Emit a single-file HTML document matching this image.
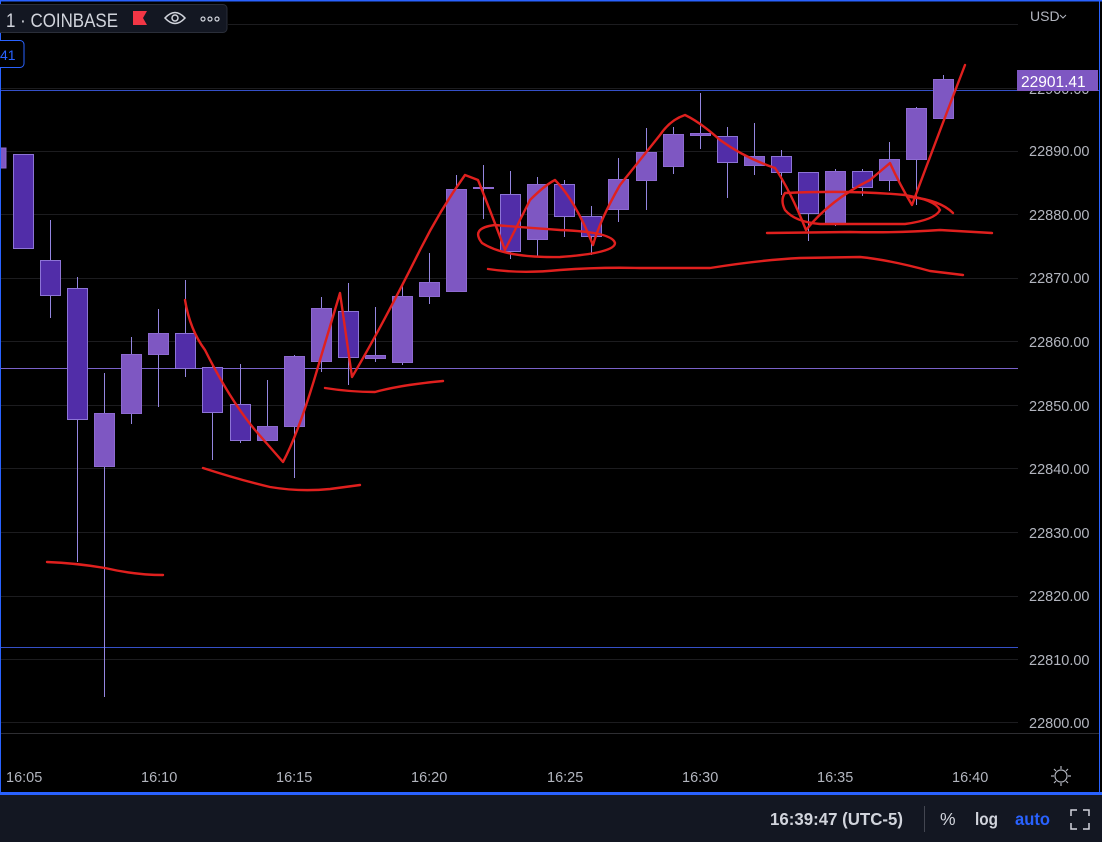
<!DOCTYPE html>
<html><head><meta charset="utf-8"><style>
html,body{margin:0;padding:0;background:#000;width:1102px;height:842px;overflow:hidden;font-family:"Liberation Sans",sans-serif}
svg{position:absolute;left:0;top:0}
.t{font-family:"Liberation Sans",sans-serif}
</style></head><body>
<svg width="1102" height="842" viewBox="0 0 1102 842">
<rect width="1102" height="842" fill="#000"/>
<g stroke="#1c1c1f" stroke-width="1">
<line x1="228" y1="24.5" x2="1018" y2="24.5"/><line x1="0" y1="88.5" x2="1018" y2="88.5"/>
<line x1="0" y1="151.5" x2="1018" y2="151.5"/><line x1="0" y1="214.5" x2="1018" y2="214.5"/>
<line x1="0" y1="278.5" x2="1018" y2="278.5"/><line x1="0" y1="341.5" x2="1018" y2="341.5"/>
<line x1="0" y1="405.5" x2="1018" y2="405.5"/><line x1="0" y1="468.5" x2="1018" y2="468.5"/>
<line x1="0" y1="532.5" x2="1018" y2="532.5"/><line x1="0" y1="596.5" x2="1018" y2="596.5"/>
<line x1="0" y1="659.5" x2="1018" y2="659.5"/><line x1="0" y1="722.5" x2="1018" y2="722.5"/>
</g>
<line x1="0" y1="733.5" x2="1100" y2="733.5" stroke="#2e2e32"/>
<line x1="0" y1="90.5" x2="1018" y2="90.5" stroke="#3550c8"/>
<line x1="0" y1="647.5" x2="1018" y2="647.5" stroke="#3550c8"/>
<line x1="0" y1="368.5" x2="1018" y2="368.5" stroke="#7a62c9"/>
<line x1="1018" y1="90.5" x2="1100" y2="90.5" stroke="#3550c8"/>
<g stroke="#9486e0" stroke-width="1">
<line x1="50.5" y1="220" x2="50.5" y2="318"/><line x1="77.5" y1="277" x2="77.5" y2="562"/>
<line x1="104.5" y1="373" x2="104.5" y2="697"/><line x1="131.5" y1="337" x2="131.5" y2="424"/>
<line x1="158.5" y1="309" x2="158.5" y2="407"/><line x1="185.5" y1="280" x2="185.5" y2="377"/>
<line x1="212.5" y1="364" x2="212.5" y2="460"/><line x1="240.5" y1="364" x2="240.5" y2="443"/>
<line x1="267.5" y1="380" x2="267.5" y2="440"/><line x1="294.5" y1="355" x2="294.5" y2="478"/>
<line x1="321.5" y1="297" x2="321.5" y2="372"/><line x1="348.5" y1="283" x2="348.5" y2="385"/>
<line x1="375.5" y1="307" x2="375.5" y2="362"/><line x1="402.5" y1="286" x2="402.5" y2="365"/>
<line x1="429.5" y1="253" x2="429.5" y2="304"/><line x1="456.5" y1="175" x2="456.5" y2="291"/>
<line x1="483.5" y1="165" x2="483.5" y2="219"/><line x1="510.5" y1="171" x2="510.5" y2="259"/>
<line x1="537.5" y1="177" x2="537.5" y2="256"/><line x1="564.5" y1="180" x2="564.5" y2="237"/>
<line x1="591.5" y1="206" x2="591.5" y2="255"/><line x1="618.5" y1="158" x2="618.5" y2="222"/>
<line x1="646.5" y1="128" x2="646.5" y2="210"/><line x1="673.5" y1="127" x2="673.5" y2="174"/>
<line x1="700.5" y1="93" x2="700.5" y2="149"/><line x1="727.5" y1="127" x2="727.5" y2="198"/>
<line x1="754.5" y1="123" x2="754.5" y2="175"/><line x1="781.5" y1="150" x2="781.5" y2="195"/>
<line x1="808.5" y1="172" x2="808.5" y2="241"/><line x1="835.5" y1="169" x2="835.5" y2="226"/>
<line x1="862.5" y1="169" x2="862.5" y2="196"/><line x1="889.5" y1="142" x2="889.5" y2="191"/>
<line x1="916.5" y1="107" x2="916.5" y2="205"/><line x1="943.5" y1="75" x2="943.5" y2="120"/>
</g>
<g fill="#7e57c2" stroke="#8d6ad0">
<rect x="-8" y="148" width="14" height="20"/>
<rect x="94.5" y="413.5" width="20" height="53"/><rect x="121.5" y="354.5" width="20" height="59"/>
<rect x="148.5" y="333.5" width="20" height="21"/><rect x="257.5" y="426.5" width="20" height="14"/>
<rect x="284.5" y="356.5" width="20" height="70"/><rect x="311.5" y="308.5" width="20" height="53"/>
<rect x="365.5" y="355.5" width="20" height="3"/><rect x="392.5" y="296.5" width="20" height="66"/>
<rect x="419.5" y="282.5" width="20" height="14"/><rect x="446.5" y="189.5" width="20" height="102"/>
<rect x="473.5" y="187.5" width="20" height="1"/>
<rect x="527.5" y="184.5" width="20" height="55"/><rect x="608.5" y="179.5" width="20" height="30"/>
<rect x="636.5" y="152.5" width="20" height="28"/><rect x="663.5" y="134.5" width="20" height="32"/>
<rect x="690.5" y="133.5" width="20" height="2"/><rect x="744.5" y="156.5" width="20" height="9"/>
<rect x="825.5" y="171.5" width="20" height="53"/><rect x="879.5" y="159.5" width="20" height="21"/>
<rect x="906.5" y="108.5" width="20" height="51"/><rect x="933.5" y="79.5" width="20" height="39"/>
</g>
<g fill="#512da8" stroke="#8d74d6">
<rect x="13.5" y="154.5" width="20" height="94"/><rect x="40.5" y="260.5" width="20" height="35"/>
<rect x="67.5" y="288.5" width="20" height="131"/><rect x="175.5" y="333.5" width="20" height="35"/>
<rect x="202.5" y="367.5" width="20" height="45"/><rect x="230.5" y="404.5" width="20" height="36"/>
<rect x="338.5" y="311.5" width="20" height="46"/><rect x="500.5" y="194.5" width="20" height="57"/>
<rect x="554.5" y="184.5" width="20" height="32"/><rect x="581.5" y="216.5" width="20" height="20"/>
<rect x="717.5" y="136.5" width="20" height="26"/><rect x="771.5" y="156.5" width="20" height="16"/>
<rect x="798.5" y="172.5" width="20" height="41"/><rect x="852.5" y="171.5" width="20" height="16"/>
</g>
<g fill="none" stroke="#e0201e" stroke-width="2.4" stroke-linecap="round" stroke-linejoin="round">
<path d="M47 562 Q75 563 105 568 Q135 575 163 575"/>
<path d="M203 468 Q240 480 270 487 Q300 492 330 489 L360 485"/>
<path d="M185 300 Q190 330 205 350 Q230 400 255 430 L283 462 Q300 430 320 360 L340 293 L352 377 Q380 330 420 250 Q440 210 465 175 L478 180 Q490 210 505 250 Q515 230 530 200 Q545 185 555 180 Q575 200 593 245 Q600 220 620 185 Q640 160 660 135 Q670 120 685 115 Q700 122 720 140 Q745 158 775 168 Q790 190 806 230 Q830 200 870 180 L890 163 Q900 185 912 205 Q940 130 965 65"/>
<path d="M325 388 Q350 392 375 392 Q400 385 443 381"/>
<path d="M495 225 Q470 228 482 243 Q505 258 560 257 Q615 253 615 243 Q612 232 560 230 Q530 228 495 225"/>
<path d="M488 269 Q520 274 560 270 Q600 267 640 268 L710 268 Q760 260 800 258 L860 257 Q890 260 930 271 L963 275"/>
<path d="M785 193 Q850 190 905 195 Q935 200 940 210 Q935 220 905 224 L820 224 Q795 222 785 210 Q780 200 785 193"/>
<path d="M910 197 Q940 200 953 213"/>
<path d="M767 233 L850 232 Q900 233 940 230 L992 233"/>
</g>
<g class="t" fill="#b2b5be" font-size="14.5">
<text x="1029" y="156">22890.00</text><text x="1029" y="220">22880.00</text>
<text x="1029" y="283">22870.00</text><text x="1029" y="347">22860.00</text>
<text x="1029" y="411">22850.00</text><text x="1029" y="474">22840.00</text>
<text x="1029" y="538">22830.00</text><text x="1029" y="601">22820.00</text>
<text x="1029" y="665">22810.00</text><text x="1029" y="728">22800.00</text>
<text x="1029" y="94">22900.00</text>
<text x="6" y="782">16:05</text><text x="141" y="782">16:10</text><text x="276" y="782">16:15</text>
<text x="411" y="782">16:20</text><text x="547" y="782">16:25</text><text x="682" y="782">16:30</text>
<text x="817" y="782">16:35</text><text x="952" y="782">16:40</text>
</g>
<text x="1030" y="21" class="t" fill="#b2b5be" font-size="14">USD</text>
<path d="M1060 15 l3 3 3-3" stroke="#b2b5be" fill="none"/>
<rect x="1017" y="70" width="81" height="21" fill="#7e57c2"/>
<text x="1021" y="87" class="t" fill="#fff" font-size="15.5">22901.41</text>
<g stroke="#b2b5be" fill="none" stroke-width="1.2">
<circle cx="1061" cy="776" r="6"/>
<path d="M1061 766v3M1061 783v3M1051 776h3M1068 776h3M1054 769l2 2M1066 781l2 2M1054 783l2-2M1066 771l2-2"/>
</g>
<rect x="0.5" y="0.5" width="1099" height="792" fill="none" stroke="#2962ff" stroke-width="1"/>
<rect x="0" y="0" width="1102" height="1.5" fill="#2962ff"/>
<rect x="0" y="792" width="1102" height="3" fill="#2962ff"/>
<rect x="0" y="795" width="1102" height="47" fill="#131722"/>
<line x1="924.5" y1="806" x2="924.5" y2="832" stroke="#434651"/>
<g class="t" font-size="17.5">
<text x="770" y="825" fill="#d1d4dc" font-weight="bold" textLength="133" lengthAdjust="spacingAndGlyphs">16:39:47 (UTC-5)</text>
<text x="940" y="825" fill="#d1d4dc">%</text>
<text x="975" y="825" fill="#d1d4dc" font-weight="bold" textLength="23" lengthAdjust="spacingAndGlyphs">log</text>
<text x="1015" y="825" fill="#2962ff" font-weight="bold" textLength="35" lengthAdjust="spacingAndGlyphs">auto</text>
</g>
<path d="M1071 816v-6h6M1083 810h6v6M1089 823v6h-6M1077 829h-6v-6" stroke="#d1d4dc" fill="none" stroke-width="1.5"/>
<rect x="-4" y="4.5" width="231" height="28" rx="4" fill="#131722" stroke="#2a2e39"/>
<text x="6" y="27" class="t" fill="#d1d4dc" font-size="19.5" textLength="112" lengthAdjust="spacingAndGlyphs">1 · COINBASE</text>
<path d="M133 11h14l-4 7 4 7h-14z" fill="#f23645"/>
<path d="M165 18q10-11 20 0q-10 11-20 0z" stroke="#d1d4dc" fill="none" stroke-width="1.5"/>
<circle cx="175" cy="18" r="3" stroke="#d1d4dc" fill="none" stroke-width="1.5"/>
<g stroke="#d1d4dc" fill="none" stroke-width="1.2"><circle cx="203" cy="19" r="2"/><circle cx="210" cy="19" r="2"/><circle cx="217" cy="19" r="2"/></g>
<rect x="-6" y="40.5" width="30" height="27" rx="4" fill="#000" stroke="#2962ff"/>
<text x="0" y="60" class="t" fill="#2962ff" font-size="14">41</text>
</svg>
</body></html>
